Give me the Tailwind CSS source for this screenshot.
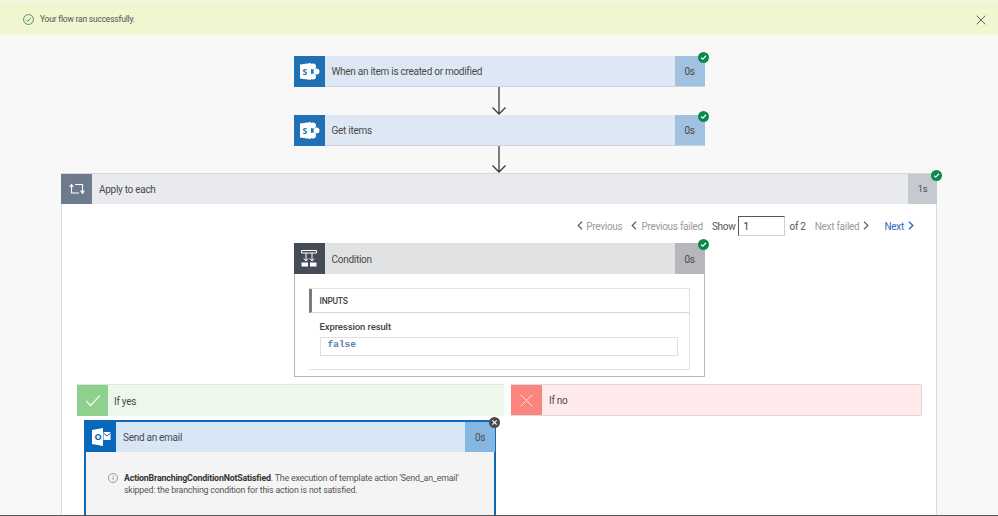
<!DOCTYPE html>
<html>
<head>
<meta charset="utf-8">
<script src="https://cdn.jsdelivr.net/npm/@tailwindcss/browser@4"></script>
</head>
<body class="m-0">
<div class="relative w-[998px] h-[516px] overflow-hidden bg-[#f8f8f8] font-['Roboto',sans-serif] text-[#4a4a4a] tracking-[-0.28px]">
  <!-- banner -->
  <div class="h-[35px] bg-[#eff6d0] border-t-2 border-[#f3f6e0] flex items-center pt-[2px] pl-[23px] pr-[13px] text-[8.5px] tracking-[-0.22px] text-[#555]">
    <svg class="w-[11px] h-[11px] mr-[6px]" viewBox="0 0 12 12" fill="none" stroke="#2f7d4f" stroke-width="0.9"><circle cx="6" cy="6" r="5.4"/><path d="M3.4 6.2 5.2 8 8.7 4.4"/></svg>
    <span>Your flow ran successfully.</span>
    <svg class="ml-auto mr-[-1px] w-[10px] h-[10px]" viewBox="0 0 10 10" fill="none" stroke="#4d6b6b" stroke-width="1"><path d="M.7.7l8.6 8.6M9.3.7.7 9.3"/></svg>
  </div>

  <div class="flex flex-col items-center pt-[21px]">
    <!-- trigger -->
    <div class="relative w-[411px] h-[31px] flex bg-[#dde8f4] border-b border-[#c9d3de]">
      <div class="w-[31px] h-[31px] bg-[#1f70b5] flex items-center justify-center">
        <svg class="w-[21px] h-[17px]" viewBox="0 0 21 17"><circle cx="14" cy="3.6" r="3" fill="#fff"/><circle cx="17.5" cy="8.5" r="3" fill="#fff"/><circle cx="14" cy="13.4" r="3" fill="#fff"/><path d="M1 1.6 12 0v17L1 15.4z" fill="#fff"/><text x="3.6" y="11.6" font-size="8.5" font-weight="700" fill="#1f70b5" font-family="Open Sans">S</text></svg>
      </div>
      <div class="flex-1 pl-[7px] pt-[1px] flex items-center text-[10px]">When an item is created or modified</div>
      <div class="w-[30px] bg-[#a0c1e0] pt-[1px] flex items-center justify-center text-[10px]">0s</div>
      <div class="absolute -right-[4px] -top-[4px] w-[11px] h-[11px] rounded-full bg-[#0a8a4a] flex items-center justify-center">
        <svg class="w-[7px] h-[7px]" viewBox="0 0 8 8" fill="none" stroke="#fff" stroke-width="1.3"><path d="M1.2 4.2 3.2 6 6.8 2"/></svg>
      </div>
    </div>
    <!-- arrow -->
    <svg class="w-[16px] h-[28px]" viewBox="0 0 16 28" fill="none" stroke="#3c3c3c" stroke-width="1.3"><path d="M8 0v27M1.5 20.5 8 27l6.5-6.5"/></svg>
    <!-- get items -->
    <div class="relative w-[411px] h-[31px] flex bg-[#dde8f4] border-b border-[#c9d3de]">
      <div class="w-[31px] h-[31px] bg-[#1f70b5] flex items-center justify-center">
        <svg class="w-[21px] h-[17px]" viewBox="0 0 21 17"><circle cx="14" cy="3.6" r="3" fill="#fff"/><circle cx="17.5" cy="8.5" r="3" fill="#fff"/><circle cx="14" cy="13.4" r="3" fill="#fff"/><path d="M1 1.6 12 0v17L1 15.4z" fill="#fff"/><text x="3.6" y="11.6" font-size="8.5" font-weight="700" fill="#1f70b5" font-family="Open Sans">S</text></svg>
      </div>
      <div class="flex-1 pl-[7px] pt-[1px] flex items-center text-[10px]">Get items</div>
      <div class="w-[30px] bg-[#a0c1e0] pt-[1px] flex items-center justify-center text-[10px]">0s</div>
      <div class="absolute -right-[4px] -top-[4px] w-[11px] h-[11px] rounded-full bg-[#0a8a4a] flex items-center justify-center">
        <svg class="w-[7px] h-[7px]" viewBox="0 0 8 8" fill="none" stroke="#fff" stroke-width="1.3"><path d="M1.2 4.2 3.2 6 6.8 2"/></svg>
      </div>
    </div>
    <svg class="w-[16px] h-[27px]" viewBox="0 0 16 27" fill="none" stroke="#3c3c3c" stroke-width="1.3"><path d="M8 0v26M1.5 19.5 8 26l6.5-6.5"/></svg>

    <!-- apply to each -->
    <div class="relative w-[876px] h-[400px] bg-white border-x border-[#dcdcdc]">
      <div class="relative h-[31px] flex bg-[#e9eaed] -mx-px border-t border-[#d8d8d8]">
        <div class="w-[31px] bg-[#6e7b8e] flex items-center justify-center">
          <svg class="w-[16px] h-[14px]" viewBox="0 0 16 14" fill="none" stroke="#fff" stroke-width="1.1"><path d="M6 2.5h7.5v8"/><path d="M10 11H2.5V3"/><path d="M.6 5 2.5 2.6 4.4 5M11.6 8.6l1.9 2.6 1.9-2.6"/></svg>
        </div>
        <div class="flex-1 pl-[7px] pt-[1px] flex items-center text-[10px]">Apply to each</div>
        <div class="w-[29px] bg-[#c5c9d0] pt-[1px] flex items-center justify-center text-[9.5px]">1s</div>
        <div class="absolute -right-[5px] -top-[4px] w-[11px] h-[11px] rounded-full bg-[#0a8a4a] flex items-center justify-center">
          <svg class="w-[7px] h-[7px]" viewBox="0 0 8 8" fill="none" stroke="#fff" stroke-width="1.3"><path d="M1.2 4.2 3.2 6 6.8 2"/></svg>
        </div>
      </div>

      <!-- pagination -->
      <div class="h-[38px] flex items-center justify-end pr-[22px] text-[10px] text-[#9a9a9a] pt-[5px]">
        <svg class="w-[6px] h-[9px] mr-[3px]" viewBox="0 0 6 9" fill="none" stroke="#666" stroke-width="1.3"><path d="M5 .7 1.2 4.5 5 8.3"/></svg>
        <span class="pt-[2px]">Previous</span>
        <svg class="w-[6px] h-[9px] ml-[9px] mr-[4px]" viewBox="0 0 6 9" fill="none" stroke="#666" stroke-width="1.3"><path d="M5 .7 1.2 4.5 5 8.3"/></svg>
        <span class="pt-[2px]">Previous failed</span>
        <span class="ml-[9px] pt-[2px] text-[#555]">Show</span>
        <span class="ml-[3px] w-[47px] h-[20px] border border-[#cfcfcf] border-l-[#555] border-t-[#555] pl-[4px] pt-[2px] flex items-center text-[#333] bg-white">1</span>
        <span class="ml-[4px] pt-[2px] text-[#555]">of 2</span>
        <span class="ml-[9px] pt-[2px]">Next failed</span>
        <svg class="w-[6px] h-[9px] ml-[4px]" viewBox="0 0 6 9" fill="none" stroke="#666" stroke-width="1.3"><path d="M1 .7 4.8 4.5 1 8.3"/></svg>
        <span class="ml-[15px] pt-[2px] text-[#2b6cb8]">Next</span>
        <svg class="w-[6px] h-[9px] ml-[4px]" viewBox="0 0 6 9" fill="none" stroke="#1f6fc0" stroke-width="1.4"><path d="M1 .7 4.8 4.5 1 8.3"/></svg>
      </div>

      <!-- condition -->
      <div class="relative w-[411px] h-[134px] mx-auto bg-white border border-[#b8b8b8] border-t-0 mt-[1px]">
        <div class="relative h-[31px] flex bg-[#e1e2e4] -mx-px">
          <div class="w-[31px] bg-[#454b57] flex items-center justify-center">
            <svg class="w-[18px] h-[19px]" viewBox="0 0 18 19" fill="none" stroke="#fff" stroke-width="1"><path d="M1.5 1.5h15v2.5h-15zM6 4v8M12 4v8M3.8 9.5 6 12l2.2-2.5M9.8 9.5 12 12l2.2-2.5"/><rect x="1.5" y="13.5" width="6.5" height="4" fill="#fff" stroke="none"/><rect x="10" y="13.5" width="6.5" height="4" fill="#fff" stroke="none"/></svg>
          </div>
          <div class="flex-1 pl-[7px] pt-[2px] flex items-center text-[10px]">Condition</div>
          <div class="w-[30px] bg-[#b5b7ba] pt-[2px] flex items-center justify-center text-[10px]">0s</div>
          <div class="absolute -right-[4px] -top-[4px] w-[11px] h-[11px] rounded-full bg-[#0a8a4a] flex items-center justify-center">
            <svg class="w-[7px] h-[7px]" viewBox="0 0 8 8" fill="none" stroke="#fff" stroke-width="1.3"><path d="M1.2 4.2 3.2 6 6.8 2"/></svg>
          </div>
        </div>
        <div class="mx-[14px] mt-[14px] h-[82px] border border-[#e2e2e2] border-l-0">
          <div class="h-[24px] border-b border-[#d8d8d8] border-l-[3px] border-l-[#7a7a7a] pl-[8px] pt-[1px] flex items-center text-[8.5px] font-medium text-[#444]">INPUTS</div>
          <div class="pl-[11px] pr-[11px] pt-[7px]">
            <div class="text-[9.5px] font-medium leading-[13px] text-[#444] tracking-[-0.1px]">Expression result</div>
            <div class="mt-[4px] h-[19px] border border-[#dfdfdf] pl-[7px] font-['Liberation_Mono',monospace] text-[9.5px] font-bold text-[#5a7fa8] leading-[13px] tracking-normal">false</div>
          </div>
        </div>
      </div>

      <!-- branches -->
      <div class="flex mt-[7px] pl-[15px] gap-[7px]">
        <div class="w-[427px]">
          <div class="h-[32px] flex bg-[#ecf8ec] border-t border-[#dfe5df]">
            <div class="w-[31px] bg-[#8ed18e] flex items-center justify-center">
              <svg class="w-[16px] h-[13px]" viewBox="0 0 16 13" fill="none" stroke="#fff" stroke-width="1.1"><path d="M1 6.8 5.6 11.6 15 1.4"/></svg>
            </div>
            <div class="pl-[6px] pt-[1px] flex items-center text-[10px]">If yes</div>
          </div>
          <div class="relative ml-[7px] mt-[4px] w-[412px] h-[120px] bg-[#f4f4f4] border-x-2 border-t-2 border-[#1068b8]">
            <div class="h-[30px] -mx-[1px] flex bg-[#d8e7f5]">
              <div class="w-[31px] bg-[#0767bb] flex items-center justify-center">
                <svg class="w-[20px] h-[18px]" viewBox="0 0 20 18"><path d="M1 2 12 0v18L1 16z" fill="#fff"/><rect x="12.5" y="4" width="7" height="8" fill="#fff"/><path d="M12.5 5 16 8l3.5-3" fill="none" stroke="#0767bb" stroke-width="1"/><text x="3.6" y="11.8" font-size="9" font-weight="700" fill="#0767bb" font-family="Open Sans">O</text></svg>
              </div>
              <div class="flex-1 pl-[7px] pt-[1px] flex items-center text-[10px]">Send an email</div>
              <div class="w-[30px] bg-[#86b6e2] pt-[1px] flex items-center justify-center text-[10px]">0s</div>
            </div>
            <div class="flex pt-[20px] pl-[22px] pr-[10px] text-[8.8px] leading-[12px] text-[#555] tracking-[-0.18px]">
              <svg class="w-[10px] h-[10px] mr-[6px] mt-[1px] shrink-0" viewBox="0 0 10 10" fill="none" stroke="#777" stroke-width="0.7"><circle cx="5" cy="5" r="4.5"/><path d="M5 4.2v3.2M5 2.4v1"/></svg>
              <div><b class="font-bold text-[#333]">ActionBranchingConditionNotSatisfied</b>. The execution of template action 'Send_an_email'<br>skipped: the branching condition for this action is not satisfied.</div>
            </div>
            <div class="absolute -right-[6px] -top-[5px] w-[11px] h-[11px] rounded-full bg-[#4a4a4a] flex items-center justify-center">
              <svg class="w-[7px] h-[7px]" viewBox="0 0 8 8" fill="none" stroke="#fff" stroke-width="1.3"><path d="M1.5 1.5l5 5M6.5 1.5l-5 5"/></svg>
            </div>
          </div>
        </div>
        <div class="w-[411px] h-[32px] flex bg-[#feeaea] border border-[#dcd6d6] border-l-0">
          <div class="w-[31px] bg-[#fb8480] flex items-center justify-center">
            <svg class="w-[13px] h-[13px]" viewBox="0 0 13 13" fill="none" stroke="#ffdcdc" stroke-width="1"><path d="M.6.6l11.8 11.8M12.4.6.6 12.4"/></svg>
          </div>
          <div class="pl-[7px] pt-[1px] flex items-center text-[10px]">If no</div>
        </div>
      </div>
    </div>
  </div>
  <!-- bottom edge of the window -->
  <div class="absolute left-0 right-0 bottom-0 h-px bg-[#555]"></div>
</div>
</body>
</html>
